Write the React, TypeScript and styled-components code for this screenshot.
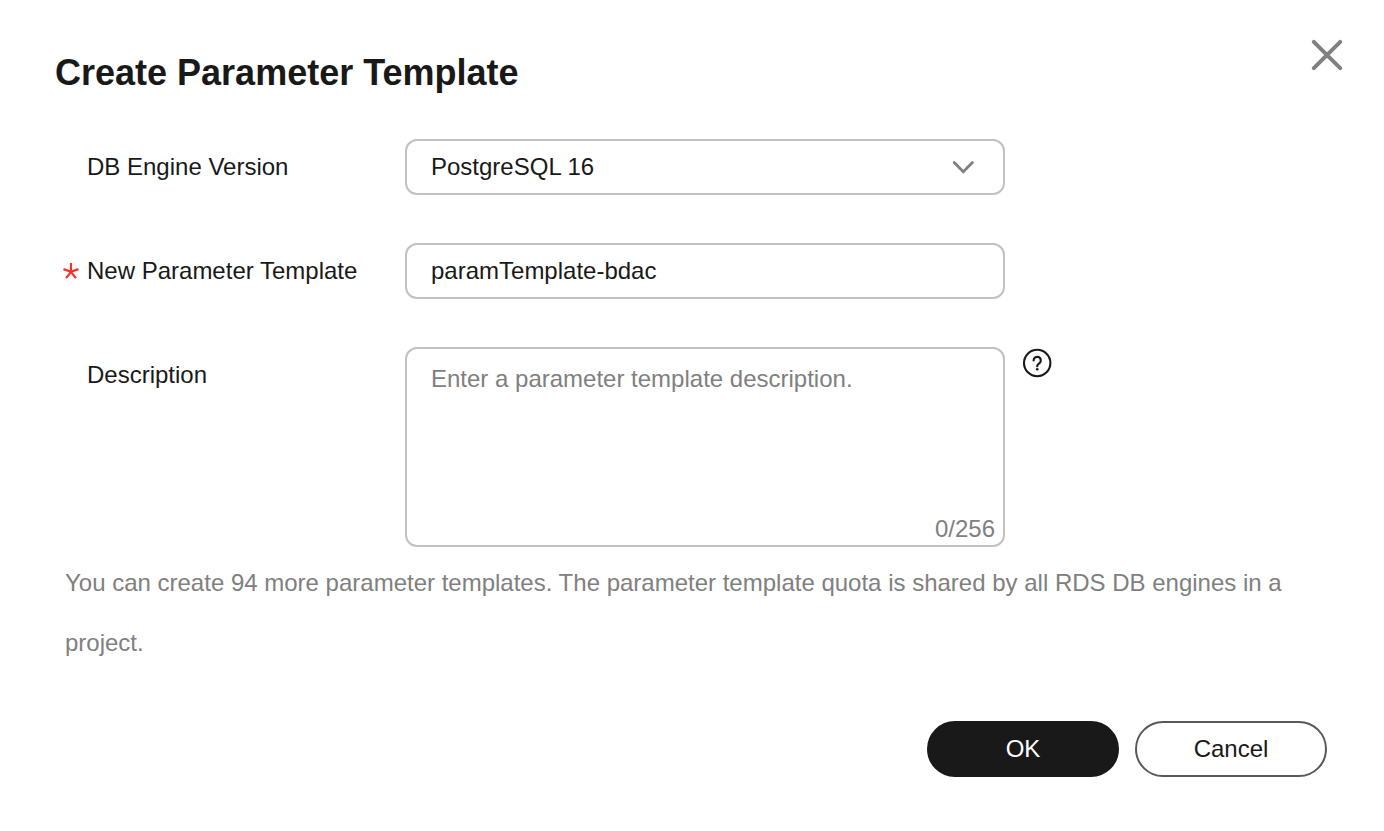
import React, { useState } from "react";
import styled, { createGlobalStyle, css } from "styled-components";

const GlobalStyle = createGlobalStyle`
  *, *::before, *::after { box-sizing: border-box; }
  body {
    margin: 0;
    background: #fff;
    color: #191919;
    font: 24px/36px "Liberation Sans", Arial, sans-serif;
  }
  h1, p { margin: 0; }
  svg { display: block; }
`;

const Dialog = styled.main`
  display: flex;
  flex-direction: column;
  padding: 36px 38px 54px 55px;
`;

const Header = styled.header`
  display: flex;
  justify-content: space-between;
  align-items: flex-start;
  margin-bottom: 42px;
`;

const Title = styled.h1`
  padding-top: 13px;
  font-size: 36px;
  line-height: 48px;
  font-weight: 700;
`;

const CloseButton = styled.button`
  padding: 2px;
  border: 0;
  background: none;
  color: #808080;
  cursor: pointer;
`;

const Form = styled.form`
  display: flex;
  flex-direction: column;
`;

const Fields = styled.div`
  display: flex;
  flex-direction: column;
  gap: 48px;
  padding-left: 8px;
`;

const Row = styled.div`
  display: grid;
  grid-template-columns: 342px minmax(0, 600px) auto;
  justify-content: start;
  align-items: start;
`;

const Label = styled.label`
  display: grid;
  grid-template-columns: 16px auto;
  justify-content: start;
  align-items: center;
  column-gap: 8px;
  height: 56px;
`;

const LabelText = styled.span`
  grid-column: 2;
`;

const controlStyle = css`
  display: block;
  width: 100%;
  padding: 0 24px;
  border: 2px solid #c2c2c2;
  border-radius: 12px;
  background: #fff;
  color: inherit;
  font: inherit;
  outline: none;
  &:focus-visible { border-color: #191919; }
`;

const ControlWrap = styled.div`
  position: relative;
`;

const TextInput = styled.input`
  ${controlStyle}
  height: 56px;
`;

const Select = styled.select`
  ${controlStyle}
  height: 56px;
  appearance: none;
`;

const SelectArrow = styled.svg`
  position: absolute;
  top: 16px;
  right: 30px;
  color: #808080;
  pointer-events: none;
`;

const TextArea = styled.textarea`
  ${controlStyle}
  height: 200px;
  padding: 12px 24px;
  resize: none;
  &::placeholder { color: #808080; opacity: 1; }
`;

const Counter = styled.span`
  position: absolute;
  right: 10px;
  bottom: 0;
  color: #808080;
`;

const HelpButton = styled.button`
  margin-left: 16px;
  padding: 0;
  border: 0;
  background: none;
  color: #191919;
  cursor: pointer;
`;

const Note = styled.p`
  margin-top: 6px;
  padding: 0 24px 0 10px;
  line-height: 60px;
  color: #808080;
`;

const Actions = styled.footer`
  display: flex;
  justify-content: flex-end;
  gap: 16px;
  margin-top: 48px;
  padding-right: 19px;
`;

const ActionButton = styled.button<{ $primary?: boolean }>`
  width: 192px;
  height: 56px;
  padding: 0;
  border: 2px solid ${(p) => (p.$primary ? "#191919" : "#595959")};
  border-radius: 28px;
  background: ${(p) => (p.$primary ? "#191919" : "#fff")};
  color: ${(p) => (p.$primary ? "#fff" : "#191919")};
  font: inherit;
  cursor: pointer;
`;

const RequiredMark = () => (
  <svg width="16" height="18" viewBox="0 0 16 18" aria-hidden="true">
    <path
      d="M8 9.8V1M8 9.8L.5 7.1M8 9.8l7.5-2.7M8 9.8l-4.9 6.4M8 9.8l4.9 6.4"
      fill="none"
      stroke="#f5312e"
      strokeWidth="2.2"
    />
  </svg>
);

const MAX_LENGTH = 256;

export default function App() {
  const [name, setName] = useState("paramTemplate-bdac");
  const [description, setDescription] = useState("");

  return (
    <Dialog>
      <GlobalStyle />
      <Header>
        <Title>Create Parameter Template</Title>
        <CloseButton type="button" aria-label="Close">
          <svg width="34" height="34" viewBox="0 0 34 34" aria-hidden="true">
            <path
              d="M3.8 3.8l26.4 26.4M30.2 3.8L3.8 30.2"
              stroke="currentColor"
              strokeWidth="4"
              strokeLinecap="round"
            />
          </svg>
        </CloseButton>
      </Header>
      <Form onSubmit={(e) => e.preventDefault()}>
        <Fields>
          <Row>
            <Label htmlFor="engine">
              <LabelText>DB Engine Version</LabelText>
            </Label>
            <ControlWrap>
              <Select id="engine" defaultValue="16">
                <option value="16">PostgreSQL 16</option>
              </Select>
              <SelectArrow width="24" height="24" viewBox="0 0 24 24" aria-hidden="true">
                <path
                  d="M3.2 7.6l9.1 9.1 9.1-9.1"
                  fill="none"
                  stroke="currentColor"
                  strokeWidth="2.8"
                  strokeLinecap="round"
                />
              </SelectArrow>
            </ControlWrap>
          </Row>
          <Row>
            <Label htmlFor="name">
              <RequiredMark />
              <LabelText>New Parameter Template</LabelText>
            </Label>
            <TextInput
              id="name"
              required
              value={name}
              onChange={(e) => setName(e.target.value)}
            />
          </Row>
          <Row>
            <Label htmlFor="description">
              <LabelText>Description</LabelText>
            </Label>
            <ControlWrap>
              <TextArea
                id="description"
                maxLength={MAX_LENGTH}
                placeholder="Enter a parameter template description."
                value={description}
                onChange={(e) => setDescription(e.target.value)}
              />
              <Counter>
                {description.length}/{MAX_LENGTH}
              </Counter>
            </ControlWrap>
            <HelpButton type="button" aria-label="Help">
              <svg width="32" height="32" viewBox="0 0 32 32" fill="none" aria-hidden="true">
                <circle cx="16.2" cy="16" r="13.2" stroke="currentColor" strokeWidth="2.1" />
                <path
                  d="M12.6 13.4a3.6 3.6 0 1 1 6.1 2.6c-1.3 1.1-2.5 1.5-2.5 3.2"
                  stroke="currentColor"
                  strokeWidth="2.2"
                  strokeLinecap="round"
                />
                <circle cx="16.2" cy="22.2" r="1.3" fill="currentColor" />
              </svg>
            </HelpButton>
          </Row>
        </Fields>
        <Note>
          You can create 94 more parameter templates. The parameter template quota is shared by all
          RDS DB engines in a project.
        </Note>
        <Actions>
          <ActionButton type="submit" $primary>
            OK
          </ActionButton>
          <ActionButton type="button">Cancel</ActionButton>
        </Actions>
      </Form>
    </Dialog>
  );
}
